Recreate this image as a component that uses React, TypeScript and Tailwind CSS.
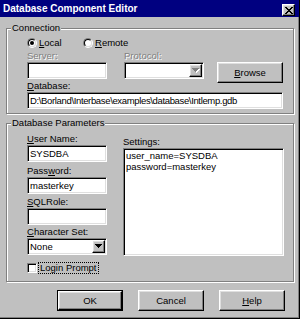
import React from "react";

const sunken =
  "border border-t-[#808080] border-l-[#808080] border-b-white border-r-white shadow-[inset_1px_1px_0_#000,inset_-1px_-1px_0_#dfdfdf]";
const raised =
  "border border-t-white border-l-white border-b-black border-r-black shadow-[inset_-1px_-1px_0_#808080,inset_1px_1px_0_#dfdfdf]";
const group =
  "relative border border-[#808080] shadow-[inset_1px_1px_0_#fff,1px_1px_0_#fff]";
const disabledText = "text-[#808080] [text-shadow:1px_1px_0_#fff]";

function Arrow({ disabled }: { disabled?: boolean }) {
  return (
    <svg width="8" height="5" viewBox="0 0 8 5" shapeRendering="crispEdges">
      {disabled && (
        <g fill="#fff">
          <rect x="1" y="1" width="7" height="1" />
          <rect x="2" y="2" width="5" height="1" />
          <rect x="3" y="3" width="3" height="1" />
          <rect x="4" y="4" width="1" height="1" />
        </g>
      )}
      <g fill={disabled ? "#808080" : "#000"}>
        <rect x="0" y="0" width="7" height="1" />
        <rect x="1" y="1" width="5" height="1" />
        <rect x="2" y="2" width="3" height="1" />
        <rect x="3" y="3" width="1" height="1" />
      </g>
    </svg>
  );
}

function Radio({
  checked,
  children,
  className = "",
}: {
  checked?: boolean;
  children: React.ReactNode;
  className?: string;
}) {
  return (
    <div className={`flex items-center ${className}`}>
      <div className="h-[10px] w-[10px] rounded-full border border-t-[#808080] border-l-[#808080] border-b-white border-r-white">
        <div className="flex h-full w-full items-center justify-center rounded-full border border-t-black border-l-black border-b-[#dfdfdf] border-r-[#dfdfdf] bg-white">
          {checked && <div className="h-[4px] w-[4px] rounded-full bg-black" />}
        </div>
      </div>
      <span className="ml-[2px]">{children}</span>
    </div>
  );
}

function Label({
  children,
  disabled,
  className = "",
}: {
  children: React.ReactNode;
  disabled?: boolean;
  className?: string;
}) {
  return (
    <div className={`h-[12px] leading-[12px] whitespace-nowrap ${disabled ? disabledText : ""} ${className}`}>
      {children}
    </div>
  );
}

function Edit({ value = "", className = "" }: { value?: string; className?: string }) {
  return (
    <div className={`${sunken} flex h-[17px] items-center bg-white px-[2px] whitespace-nowrap overflow-hidden ${className}`}>
      {value}
    </div>
  );
}

function Combo({
  value = "",
  disabled,
  className = "",
}: {
  value?: string;
  disabled?: boolean;
  className?: string;
}) {
  return (
    <div className={`${sunken} flex h-[17px] items-stretch bg-white p-[1px] ${className}`}>
      <div className="flex flex-1 items-center px-[1px]">{value}</div>
      <div className={`${raised} flex w-[13px] items-center justify-center bg-[#c0c0c0]`}>
        <Arrow disabled={disabled} />
      </div>
    </div>
  );
}

function Button({
  children,
  isDefault,
  className = "",
}: {
  children: React.ReactNode;
  isDefault?: boolean;
  className?: string;
}) {
  if (isDefault) {
    return (
      <div className={`flex h-[21px] w-[66px] border border-black ${className}`}>
        <div className={`${raised} flex flex-1 items-center justify-center`}>{children}</div>
      </div>
    );
  }
  return (
    <div className={`${raised} flex h-[21px] w-[66px] items-center justify-center ${className}`}>
      {children}
    </div>
  );
}

export default function App() {
  return (
    <div className="flex h-[319px] w-[300px] flex-col overflow-hidden border-r border-b border-black bg-[#c0c0c0] text-[9.5px] leading-[12px] text-black shadow-[inset_-1px_-1px_0_#808080] font-['Liberation_Sans',Arial,sans-serif]">
      {/* Title bar */}
      <div className="flex h-[17px] items-start bg-[#000080]">
        <div className="mt-[2.5px] pl-[3px] text-[10px] leading-[12px] font-bold text-white whitespace-nowrap">
          Database Component Editor
        </div>
        <div className={`${raised} ml-auto mr-[4px] mt-[4px] flex h-[12px] w-[13px] items-center justify-center bg-[#c0c0c0]`}>
          <svg width="8" height="7" viewBox="0 0 8 7" shapeRendering="crispEdges">
            <path
              fill="#000"
              d="M0 0h2v1H0zM6 0h2v1H6zM1 1h2v1H1zM5 1h2v1H5zM2 2h4v1H2zM3 3h2v1H3zM2 4h4v1H2zM1 5h2v1H1zM5 5h2v1H5zM0 6h2v1H0zM6 6h2v1H6z"
            />
          </svg>
        </div>
      </div>

      {/* Body */}
      <div className="flex flex-1 flex-col pl-[6px] pt-[11px]">
        {/* Connection */}
        <div className={`${group} w-[288px] pl-[20px] pt-[8px] pb-[4px]`}>
          <span className="absolute left-[4px] top-[-7px] bg-[#c0c0c0] px-[1px] leading-[12px]">
            Connection
          </span>
          <div className="flex h-[12px] items-center">
            <Radio checked className="w-[56px]">
              <u>L</u>ocal
            </Radio>
            <Radio>
              <u>R</u>emote
            </Radio>
          </div>
          <div className="mt-[1px] flex h-[30px] items-start">
            <div className="w-[80px]">
              <Label disabled>Server:</Label>
              <Edit className="w-[80px]" />
            </div>
            <div className="ml-[17px] w-[80px]">
              <Label disabled>Protocol:</Label>
              <Combo disabled className="w-[80px]" />
            </div>
            <Button className="ml-[13px] mt-[12px] w-[65px]">
              <span>
                <u>B</u>rowse
              </span>
            </Button>
          </div>
          <div>
            <Label>
              <u>D</u>atabase:
            </Label>
            <Edit
              className="w-[256px] tracking-[-0.35px]"
              value="D:\Borland\Interbase\examples\database\Intlemp.gdb"
            />
          </div>
        </div>

        {/* Database Parameters */}
        <div className={`${group} mt-[9px] flex w-[288px] pl-[20px] pt-[9px] pb-[7px]`}>
          <span className="absolute left-[4px] top-[-7px] bg-[#c0c0c0] px-[1px] leading-[12px]">
            Database Parameters
          </span>
          <div className="flex w-[80px] flex-col">
            <Label>
              <u>U</u>ser Name:
            </Label>
            <Edit value="SYSDBA" />
            <Label className="mt-[3px]">
              Pass<u>w</u>ord:
            </Label>
            <Edit value="masterkey" />
            <Label className="mt-[2px]">
              <u>S</u>QLRole:
            </Label>
            <Edit />
            <Label className="mt-[1px]">
              <u>C</u>haracter Set:
            </Label>
            <Combo value="None" />
            <div className="mt-[7px] flex h-[12px] items-center">
              <div className={`${sunken} h-[10px] w-[10px] bg-white`} />
              <div className="ml-[1px] border border-dotted border-black px-[1px] leading-[10px] whitespace-nowrap">
                Login Prompt
              </div>
            </div>
          </div>
          <div className="ml-[16px] flex w-[161px] flex-col pt-[3px]">
            <Label>Settings:</Label>
            <div className={`${sunken} h-[108px] bg-white px-[2px] pt-[1px] leading-[11px]`}>
              <div>user_name=SYSDBA</div>
              <div>password=masterkey</div>
            </div>
          </div>
        </div>

        {/* Buttons */}
        <div className="mt-[8px] flex gap-[15px] pl-[51px]">
          <Button isDefault>OK</Button>
          <Button>Cancel</Button>
          <Button>
            <span>
              <u>H</u>elp
            </span>
          </Button>
        </div>
      </div>
    </div>
  );
}
